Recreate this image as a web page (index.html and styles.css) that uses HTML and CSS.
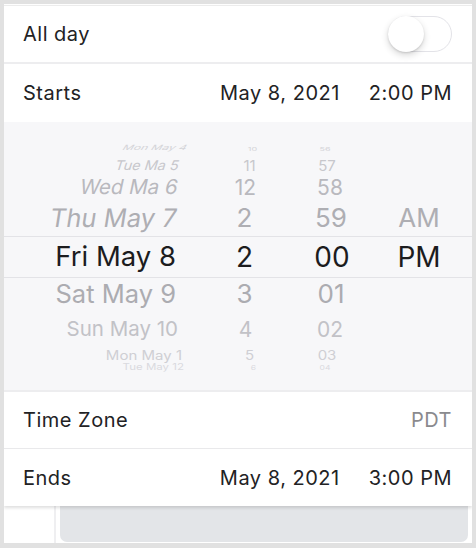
FILE: index.html
```html
<!DOCTYPE html>
<html lang="en">
<head>
<meta charset="utf-8">
<title>Event time</title>
<link rel="stylesheet" href="styles.css">
</head>
<body>
<div class="screen">
  <div class="card">
    <div class="row row-allday">
      <span class="label">All day</span>
      <span class="toggle"><span class="knob"></span></span>
    </div>
    <div class="divider thick"></div>
    <div class="row row-starts">
      <span class="label">Starts</span>
      <span class="value"><span>May 8, 2021</span><span>2:00 PM</span></span>
    </div>
    <div class="picker">
      <div class="prow r1"><span class="pd">Mon May 4</span><span class="ph">10</span><span class="pm">56</span><span class="pa"></span></div>
      <div class="prow r2"><span class="pd">Tue Ma 5</span><span class="ph">11</span><span class="pm">57</span><span class="pa"></span></div>
      <div class="prow r3"><span class="pd">Wed Ma 6</span><span class="ph">12</span><span class="pm">58</span><span class="pa"></span></div>
      <div class="prow r4"><span class="pd">Thu May 7</span><span class="ph">2</span><span class="pm">59</span><span class="pa">AM</span></div>
      <div class="prow r5"><span class="pd">Fri May 8</span><span class="ph">2</span><span class="pm">00</span><span class="pa">PM</span></div>
      <div class="prow r6"><span class="pd">Sat May 9</span><span class="ph">3</span><span class="pm">01</span><span class="pa"></span></div>
      <div class="prow r7"><span class="pd">Sun May 10</span><span class="ph">4</span><span class="pm">02</span><span class="pa"></span></div>
      <div class="prow r8"><span class="pd">Mon May 1</span><span class="ph">5</span><span class="pm">03</span><span class="pa"></span></div>
      <div class="prow r9"><span class="pd">Tue May 12</span><span class="ph">6</span><span class="pm">04</span><span class="pa"></span></div>
    </div>
    <div class="divider thick picker-end"></div>
    <div class="row row-tz">
      <span class="label">Time Zone</span>
      <span class="value muted">PDT</span>
    </div>
    <div class="divider"></div>
    <div class="row row-ends">
      <span class="label">Ends</span>
      <span class="value"><span>May 8, 2021</span><span>3:00 PM</span></span>
    </div>
  </div>
  <div class="calendar">
    <div class="gutter"><span class="hour-label">1 PM</span></div>
    <div class="events"><div class="event"></div></div>
  </div>
</div>
</body>
</html>
```

FILE: styles.css
```css
html {
  background: #e1e1e1;
}
body {
  margin: 0;
  font-family: Inter, "Liberation Sans", sans-serif;
  color: #1c1c1e;
}
.screen {
  margin: 4px 4px 5px 4px;
  height: 539px;
  box-sizing: border-box;
  padding-top: 1px;
  background: #fff;
  display: flex;
  flex-direction: column;
  overflow: hidden;
}
.card {
  position: relative;
  z-index: 1;
  flex: none;
  background: #fff;
  border-top: 1px solid #ececec;
  box-shadow: 0 2px 3px rgba(0, 0, 0, 0.13);
}
.row {
  display: flex;
  align-items: center;
  justify-content: space-between;
  padding: 0 20px 0 19px;
  font-size: 20px;
  letter-spacing: 0.5px;
  color: #222224;
}
.row-allday { height: 56px; }
.row-starts { height: 58px; }
.row-tz { height: 56px; }
.row-ends { height: 57px; }
.value {
  display: flex;
  gap: 29px;
}
.muted {
  color: #8a8a8e;
}
.divider {
  height: 1px;
  background: #e9e9eb;
}
.divider.thick {
  height: 2px;
  background: #ededef;
}
.toggle {
  width: 64px;
  height: 36px;
  box-sizing: border-box;
  border: 1.5px solid #e3e3e8;
  border-radius: 18px;
  background: #fff;
  display: flex;
  align-items: center;
}
.knob {
  width: 36px;
  height: 36px;
  margin-left: -1.5px;
  border-radius: 50%;
  background: #fff;
  box-shadow: 0 3px 7px rgba(0, 0, 0, 0.16), 0 1px 2px rgba(0, 0, 0, 0.12);
}

/* wheel picker */
.picker {
  background: #f7f7f9;
  height: 268px;
  box-sizing: border-box;
  padding-top: 20px;
}
.prow {
  --dx: 0px;
  --hx: 0px;
  --mx: 0px;
  --sy: 1;
  --sk: 0deg;
  --fs: 20px;
  --ns: 20px;
  display: grid;
  grid-template-columns: 173px 135px 38px 1fr;
  align-items: center;
  line-height: 1;
  white-space: nowrap;
  color: var(--c);
}
.pd {
  text-align: right;
  font-size: var(--fs);
  transform-origin: right center;
  transform: translateX(var(--dx)) scaleY(var(--sy)) skewX(var(--sk));
}
.ph, .pm {
  text-align: center;
  font-size: var(--ns);
}
.ph {
  transform: translateX(var(--hx)) scaleY(var(--sy));
}
.pm {
  transform: translateX(var(--mx)) scaleY(var(--sy));
}
.pa {
  text-align: center;
  padding-left: 16px;
  font-size: var(--ns);
}
.r1 { height: 12px; --c: #d4d4d8; --fs: 12px; --ns: 9px; --sy: 0.6; --sk: -22deg; --dx: 10px; --hx: 8px; --mx: -6px; }
.r2 { height: 22px; --c: #c7c7cc; --fs: 14.5px; --ns: 15px; --sy: 0.92; --sk: -16deg; --dx: 2px; --hx: 5px; --mx: -4px; }
.r3 { height: 23px; --c: #b9b9be; --fs: 20.5px; --ns: 21px; --sk: -12deg; --dx: 1px; --hx: 1px; --mx: -1px; }
.r4 { height: 37px; --c: #aeaeb3; --fs: 25.5px; --ns: 26px; --sk: -9deg; }
.r5 {
  height: 42px;
  box-sizing: border-box;
  border-top: 1px solid #e3e3e7;
  border-bottom: 1px solid #e3e3e7;
  --c: #1c1c1e; --fs: 27.5px; --ns: 28px; --dx: -1px; --mx: 1px;
}
.r6 { height: 32px; --c: #acacb1; --fs: 25.5px; --ns: 26px; --dx: -1px; }
.r7 { height: 38px; --c: #c2c2c7; --fs: 20.5px; --ns: 21px; --dx: 1px; --hx: 1px; --mx: -1px; }
.r8 { height: 12px; --c: #cfcfd4; --fs: 15px; --ns: 15px; --sy: 0.85; --dx: 5px; --hx: 5px; --mx: -4px; }
.r9 { height: 16px; --c: #dadadf; --fs: 11.5px; --ns: 8.5px; --sy: 0.75; --dx: 7px; --hx: 9px; --mx: -6px; }

/* calendar peeking below the card */
.calendar {
  flex: 1;
  margin-top: -30px;
  display: flex;
}
.gutter {
  width: 52px;
  flex: none;
  border-right: 2px solid #efeff1;
  padding: 14px 0 0 16px;
  box-sizing: border-box;
}
.hour-label {
  font-size: 12px;
  color: #9a9aa0;
}
.events {
  flex: 1;
  padding: 0 4px 1px 4px;
  display: flex;
}
.event {
  flex: 1;
  background: #e3e5e8;
  border-radius: 0 0 7px 7px;
}
```
